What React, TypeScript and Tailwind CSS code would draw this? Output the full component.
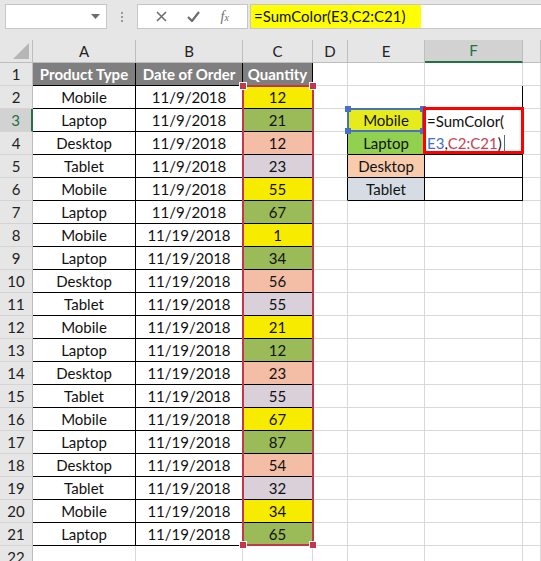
import React from "react";

type Kind = "Mobile" | "Laptop" | "Desktop" | "Tablet";

const qtyBg: Record<Kind, string> = {
  Mobile: "bg-[#f7eb00]",
  Laptop: "bg-[#9bbb59]",
  Desktop: "bg-[#f4bea6]",
  Tablet: "bg-[#d9d0da]",
};

const legendBg: Record<Kind, string> = {
  Mobile: "bg-[#e6ec1c]",
  Laptop: "bg-[#92d050]",
  Desktop: "bg-[#f8cbad]",
  Tablet: "bg-[#d6dce4]",
};

const rows: [Kind, string, number][] = [
  ["Mobile", "11/9/2018", 12],
  ["Laptop", "11/9/2018", 21],
  ["Desktop", "11/9/2018", 12],
  ["Tablet", "11/9/2018", 23],
  ["Mobile", "11/9/2018", 55],
  ["Laptop", "11/9/2018", 67],
  ["Mobile", "11/19/2018", 1],
  ["Laptop", "11/19/2018", 34],
  ["Desktop", "11/19/2018", 56],
  ["Tablet", "11/19/2018", 55],
  ["Mobile", "11/19/2018", 21],
  ["Laptop", "11/19/2018", 12],
  ["Desktop", "11/19/2018", 23],
  ["Tablet", "11/19/2018", 55],
  ["Mobile", "11/19/2018", 67],
  ["Laptop", "11/19/2018", 87],
  ["Desktop", "11/19/2018", 54],
  ["Tablet", "11/19/2018", 32],
  ["Mobile", "11/19/2018", 34],
  ["Laptop", "11/19/2018", 65],
];

const legend: Kind[] = ["Mobile", "Laptop", "Desktop", "Tablet"];

const grid = "border-r border-b border-[#d9d9d9]";
const boxed = "border-r border-b border-black";

function Cell({ className = "", children }: { className?: string; children?: React.ReactNode }) {
  return <div className={`flex items-center justify-center overflow-visible whitespace-nowrap text-[15px] text-[#111] ${className}`}>{children}</div>;
}

function RowHead({ n }: { n: number }) {
  const sel = n === 3;
  return (
    <div
      className={`flex items-center justify-center text-[15px] border-b border-[#d4d4d4] ${
        sel ? "bg-[#d2d2d2] text-[#217346] border-r-2 border-r-[#217346]" : "bg-[#e6e6e6] text-[#222] border-r border-r-[#bdbdbd]"
      }`}
    >
      {n}
    </div>
  );
}

function Toolbar() {
  return (
    <div className="h-[40px] bg-[#e6e6e6] flex items-start pt-[4px] pl-[5px]">
      <div className="w-[102px] h-[25px] bg-white border border-[#c6c6c6] flex items-center justify-end pr-[6px]">
        <svg width="9" height="5" viewBox="0 0 9 5"><path d="M0 0h9L4.5 5z" fill="#6b6b6b" /></svg>
      </div>
      <div className="w-[30px] h-[25px] flex flex-col items-center justify-center gap-[2px]">
        <span className="w-[2px] h-[2px] bg-[#9a9a9a]" />
        <span className="w-[2px] h-[2px] bg-[#9a9a9a]" />
        <span className="w-[2px] h-[2px] bg-[#9a9a9a]" />
      </div>
      <div className="w-[111px] h-[25px] bg-white border border-[#c6c6c6] flex items-center justify-around px-[8px]">
        <svg width="11" height="11" viewBox="0 0 11 11"><path d="M1 1l9 9M10 1l-9 9" stroke="#6d6d6d" strokeWidth="1.6" /></svg>
        <svg width="13" height="11" viewBox="0 0 13 11"><path d="M1 6l4 4 7-9" stroke="#6d6d6d" strokeWidth="2.2" fill="none" /></svg>
        <span className="italic text-[14px] text-[#6d6d6d] font-['Liberation_Serif',serif]">
          f<span className="text-[10px]">x</span>
        </span>
      </div>
      <div className="ml-[2px] flex-1 h-[25px] bg-white border-y border-l border-[#c6c6c6] flex">
        <div className="bg-[#ffff00] h-full flex items-center pl-[3px] pr-[16px] text-[15px] text-[#111]">=SumColor(E3,C2:C21)</div>
      </div>
    </div>
  );
}

export default function App() {
  const colLetters = ["A", "B", "C", "D", "E", "F", ""];
  return (
    <div className="w-[541px] h-[561px] overflow-hidden bg-white font-['Lato','Liberation_Sans',sans-serif]">
      <Toolbar />
      <div className="relative grid grid-cols-[33px_103px_107px_70px_35px_77px_98px_1fr] auto-rows-[23px]">
        {/* column headers */}
        <div className="bg-[#e6e6e6] border-r border-b border-[#bdbdbd] flex items-end justify-end p-[3px]">
          <svg width="16" height="16" viewBox="0 0 16 16"><path d="M16 0v16H0z" fill="#b6b6b6" /></svg>
        </div>
        {colLetters.map((c, i) =>
          c === "F" ? (
            <div key={i} className="bg-[#d2d2d2] text-[#217346] text-[15px] flex items-center justify-center border-r border-[#bdbdbd] border-b-2 border-b-[#217346]">
              F
            </div>
          ) : (
            <div key={i} className="bg-[#e6e6e6] text-[#222] text-[15px] flex items-center justify-center border-r border-b border-[#bdbdbd]">
              {c}
            </div>
          )
        )}

        {/* row 1 */}
        <RowHead n={1} />
        <Cell className={`${boxed} bg-[#7f7f7f] !text-white font-bold`}>Product Type</Cell>
        <Cell className={`${boxed} bg-[#7f7f7f] !text-white font-bold`}>Date of Order</Cell>
        <Cell className={`${boxed} bg-[#7f7f7f] !text-white font-bold`}>Quantity</Cell>
        <Cell className={grid} />
        <Cell className={grid} />
        <Cell className={grid} />
        <Cell className={grid} />

        {rows.map(([kind, date, qty], i) => {
          const r = i + 2;
          const leg = r >= 3 && r <= 6 ? legend[r - 3] : null;
          return (
            <React.Fragment key={r}>
              <RowHead n={r} />
              <Cell className={boxed}>{kind}</Cell>
              <Cell className={boxed}>{date}</Cell>
              <Cell className={`${boxed} ${qtyBg[kind]}`}>{qty}</Cell>
              <Cell className={leg ? "border-r border-b border-r-black border-b-[#d9d9d9]" : grid} />
              {leg ? (
                <Cell className={`${boxed} ${legendBg[leg]}`}>{leg}</Cell>
              ) : (
                <Cell className={r === 2 ? "border-r border-b border-r-[#d9d9d9] border-b-black" : grid} />
              )}
              {leg ? <Cell className={boxed} /> : <Cell className={r === 2 ? "border-r border-b border-r-black border-b-black" : grid} />}
              <Cell className={grid} />
            </React.Fragment>
          );
        })}

        <RowHead n={22} />
        <Cell className={grid} />
        <Cell className={grid} />
        <Cell className={grid} />
        <Cell className={grid} />
        <Cell className={grid} />
        <Cell className={grid} />
        <Cell className={grid} />

        <div className="absolute left-[242px] top-[45px] w-[72px] h-[461px] border-2 border-[#c3374b] pointer-events-none">
          <span className="absolute -left-[5px] -top-[5px] w-[8px] h-[8px] bg-[#c3374b] border border-white" />
          <span className="absolute -right-[5px] -top-[5px] w-[8px] h-[8px] bg-[#c3374b] border border-white" />
          <span className="absolute -left-[5px] -bottom-[5px] w-[8px] h-[8px] bg-[#c3374b] border border-white" />
          <span className="absolute -right-[5px] -bottom-[5px] w-[8px] h-[8px] bg-[#c3374b] border border-white" />
        </div>

        {/* reference highlight on E3 */}
        <div className="absolute left-[347px] top-[68px] w-[77px] h-[24px] border-2 border-[#4472c4] pointer-events-none">
          <span className="absolute -left-[4px] -top-[4px] w-[6px] h-[6px] bg-[#4472c4]" />
          <span className="absolute -right-[4px] -top-[4px] w-[6px] h-[6px] bg-[#4472c4]" />
          <span className="absolute -left-[4px] -bottom-[4px] w-[6px] h-[6px] bg-[#4472c4]" />
          <span className="absolute -right-[4px] -bottom-[4px] w-[6px] h-[6px] bg-[#4472c4]" />
        </div>

        {/* in-cell edit box over F3:F4 */}
        <div className="absolute left-[423px] top-[67px] w-[101px] h-[47px] bg-white border-[3px] border-[#ff0000] pl-[1px] text-[15px] leading-[22px] text-[#111]">
          <div>=SumColor(</div>
          <div className="flex items-center">
            <span className="text-[#3f6fcc]">E3</span>
            <span>,</span>
            <span className="text-[#c8424f]">C2:C21</span>
            <span>)</span>
            <span className="ml-[2px] w-px h-[17px] bg-[#666]" />
          </div>
        </div>
      </div>
    </div>
  );
}
